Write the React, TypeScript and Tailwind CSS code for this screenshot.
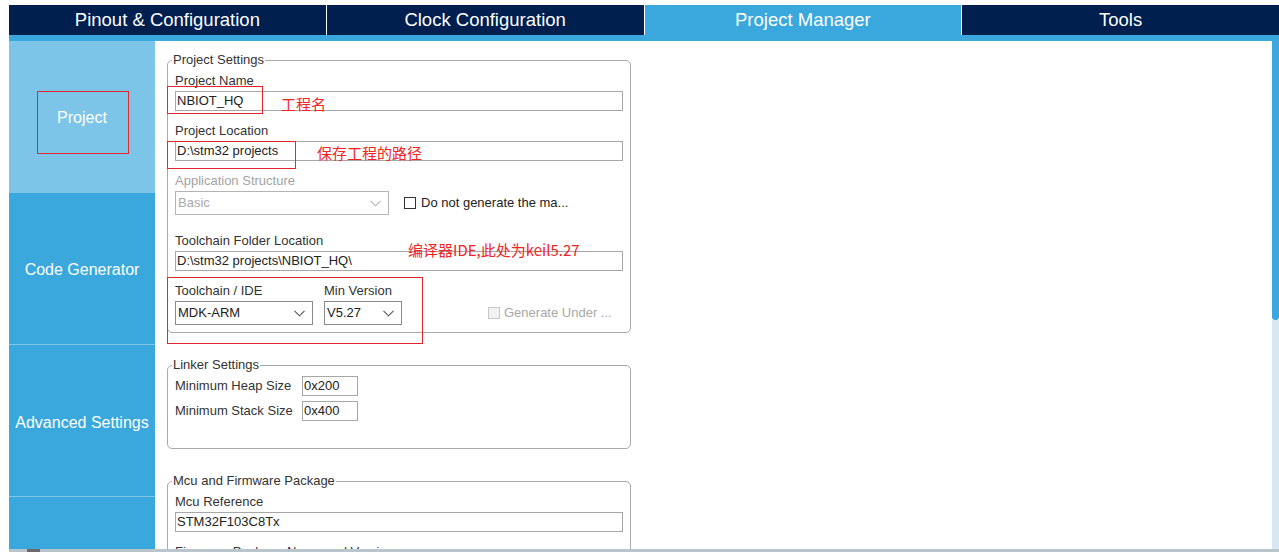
import React from 'react';

const tabs = ['Pinout & Configuration', 'Clock Configuration', 'Project Manager', 'Tools'];
const ui = { fontFamily: '"Liberation Sans", Arial, sans-serif' };
const cjk = { fontFamily: '"Noto Sans CJK SC", "Liberation Sans", sans-serif' };

function Chevron({ muted }: { muted?: boolean }) {
  return (
    <svg width="11" height="7" viewBox="0 0 11 7" className="shrink-0">
      <path d="M0.5 0.8 L5.5 5.8 L10.5 0.8" fill="none" stroke={muted ? '#b5b5b5' : '#555'} strokeWidth="1.1" />
    </svg>
  );
}

function Label({ children, muted }: { children: React.ReactNode; muted?: boolean }) {
  return (
    <div className={`h-[14px] text-[13px] leading-[14px] ${muted ? 'text-[#a3a3a3]' : 'text-[#333]'}`}>
      {children}
    </div>
  );
}

function TextBox({ value, className = '' }: { value: string; className?: string }) {
  return (
    <div className={`h-[20px] border border-[#a7a7a7] bg-white px-[1px] text-[13px] leading-[18px] text-[#222] ${className}`}>
      {value}
    </div>
  );
}

function Select({ value, muted, className = '' }: { value: string; muted?: boolean; className?: string }) {
  return (
    <div
      className={`flex h-[24px] items-center justify-between border bg-white pl-[2px] pr-[7px] text-[13px] ${
        muted ? 'border-[#b4b4b4] text-[#a8a8a8]' : 'border-[#8a8a8a] text-[#222]'
      } ${className}`}
    >
      <span>{value}</span>
      <Chevron muted={muted} />
    </div>
  );
}

function Group({ title, className = '', children }: { title: string; className?: string; children: React.ReactNode }) {
  return (
    <fieldset className={`ml-[12px] w-[464px] rounded-[5px] border border-[#a9a9a9] px-[7px] ${className}`}>
      <legend className="-ml-[3px] px-[1px] text-[13px] leading-[14px] text-[#333]">{title}</legend>
      {children}
    </fieldset>
  );
}

function Note({ text, className }: { text: string; className: string }) {
  return (
    <div className={`absolute text-[15px] leading-[18px] text-[#f22424] ${className}`} style={cjk}>
      {text}
    </div>
  );
}

export default function App() {
  return (
    <div className="relative h-[552px] w-[1279px] overflow-hidden bg-white pl-[9px] pt-[5px]" style={ui}>
      <div className="flex h-[30px] bg-[#001e4e]">
        {tabs.map((tab, i) => (
          <div
            key={tab}
            className={`flex flex-1 items-center justify-center text-[18.5px] text-white ${i > 0 ? 'border-l border-white' : ''} ${
              i === 2 ? 'bg-[#3aa8dc]' : ''
            }`}
          >
            {tab}
          </div>
        ))}
      </div>
      <div className="h-[6px] bg-[#3aa8dc]" />

      <div className="flex h-[508px]">
        <div className="flex w-[146px] flex-col text-[16px] text-white">
          <div className="flex h-[152px] items-center justify-center bg-[#7cc5e8] pt-[1px]">Project</div>
          <div className="flex h-[152px] items-center justify-center border-b border-[#80c8ea] bg-[#3aa8dc] pt-[3px]">Code Generator</div>
          <div className="flex h-[152px] items-center justify-center border-b border-[#80c8ea] bg-[#3aa8dc] pt-[4px]">Advanced Settings</div>
          <div className="flex-1 bg-[#3aa8dc]" />
        </div>

        <div className="flex-1 overflow-hidden">
          <Group title="Project Settings" className="mt-[12px] pb-[7px]">
            <div className="mt-[7px]">
              <Label>Project Name</Label>
              <TextBox value="NBIOT_HQ" className="mt-[3px]" />
            </div>
            <div className="mt-[13px]">
              <Label>Project Location</Label>
              <TextBox value="D:\stm32 projects" className="mt-[3px]" />
            </div>
            <div className="mt-[13px]">
              <Label muted>Application Structure</Label>
              <div className="mt-[3px] flex items-center">
                <Select value="Basic" muted className="w-[214px]" />
                <div className="ml-[15px] h-[12px] w-[12px] border border-[#333] bg-white" />
                <span className="ml-[5px] text-[13px] text-[#222]">Do not generate the ma...</span>
              </div>
            </div>
            <div className="mt-[19px]">
              <Label>Toolchain Folder Location</Label>
              <TextBox value="D:\stm32 projects\NBIOT_HQ\" className="mt-[3px]" />
            </div>
            <div className="mt-[13px] flex items-end">
              <div className="w-[138px]">
                <Label>Toolchain / IDE</Label>
                <Select value="MDK-ARM" className="mt-[3px]" />
              </div>
              <div className="ml-[11px] w-[78px]">
                <Label>Min Version</Label>
                <Select value="V5.27" className="mt-[3px]" />
              </div>
              <div className="ml-[86px] flex h-[24px] items-center">
                <div className="h-[12px] w-[12px] border border-[#c8c8c8] bg-[#f2f2f2]" />
                <span className="ml-[4px] text-[13px] text-[#a8a8a8]">Generate Under ...</span>
              </div>
            </div>
          </Group>

          <Group title="Linker Settings" className="mt-[25px] pb-[27px]">
            <div className="mt-[4px] flex items-center">
              <div className="w-[127px] text-[13px] text-[#333]">Minimum Heap Size</div>
              <TextBox value="0x200" className="w-[56px]" />
            </div>
            <div className="mt-[5px] flex items-center">
              <div className="w-[127px] text-[13px] text-[#333]">Minimum Stack Size</div>
              <TextBox value="0x400" className="w-[56px]" />
            </div>
          </Group>

          <Group title="Mcu and Firmware Package" className="mt-[25px] pb-[40px]">
            <div className="mt-[7px]">
              <Label>Mcu Reference</Label>
              <TextBox value="STM32F103C8Tx" className="mt-[3px]" />
            </div>
            <div className="mt-[13px]">
              <Label>Firmware Package Name and Version</Label>
              <TextBox value="STM32Cube FW_F1 V1.8.0" className="mt-[3px]" />
            </div>
          </Group>
        </div>

        <div className="flex w-[7px] flex-col">
          <div className="h-[279px] rounded-b-[3px] bg-[#3aa8dc]" />
          <div className="flex-1 bg-[#d7e8f5]" />
        </div>
      </div>

      <div className="flex h-[3px] bg-[#b9c4cb]">
        <div className="ml-[18px] w-[13px] bg-[#6b6b6b]" />
      </div>

      <div className="absolute left-[37px] top-[91px] h-[63px] w-[92px] border border-[#e5262c]" />
      <div className="absolute left-[167px] top-[86px] h-[28px] w-[96px] border border-[#e5262c]" />
      <div className="absolute left-[167px] top-[141px] h-[28px] w-[129px] border border-[#e5262c]" />
      <div className="absolute left-[167px] top-[277px] h-[67px] w-[256px] border border-[#e5262c]" />

      <Note text="工程名" className="left-[281px] top-[95px]" />
      <Note text="保存工程的路径" className="left-[317px] top-[144px]" />
      <Note text="编译器IDE,此处为keil5.27" className="left-[408px] top-[241px]" />
    </div>
  );
}
